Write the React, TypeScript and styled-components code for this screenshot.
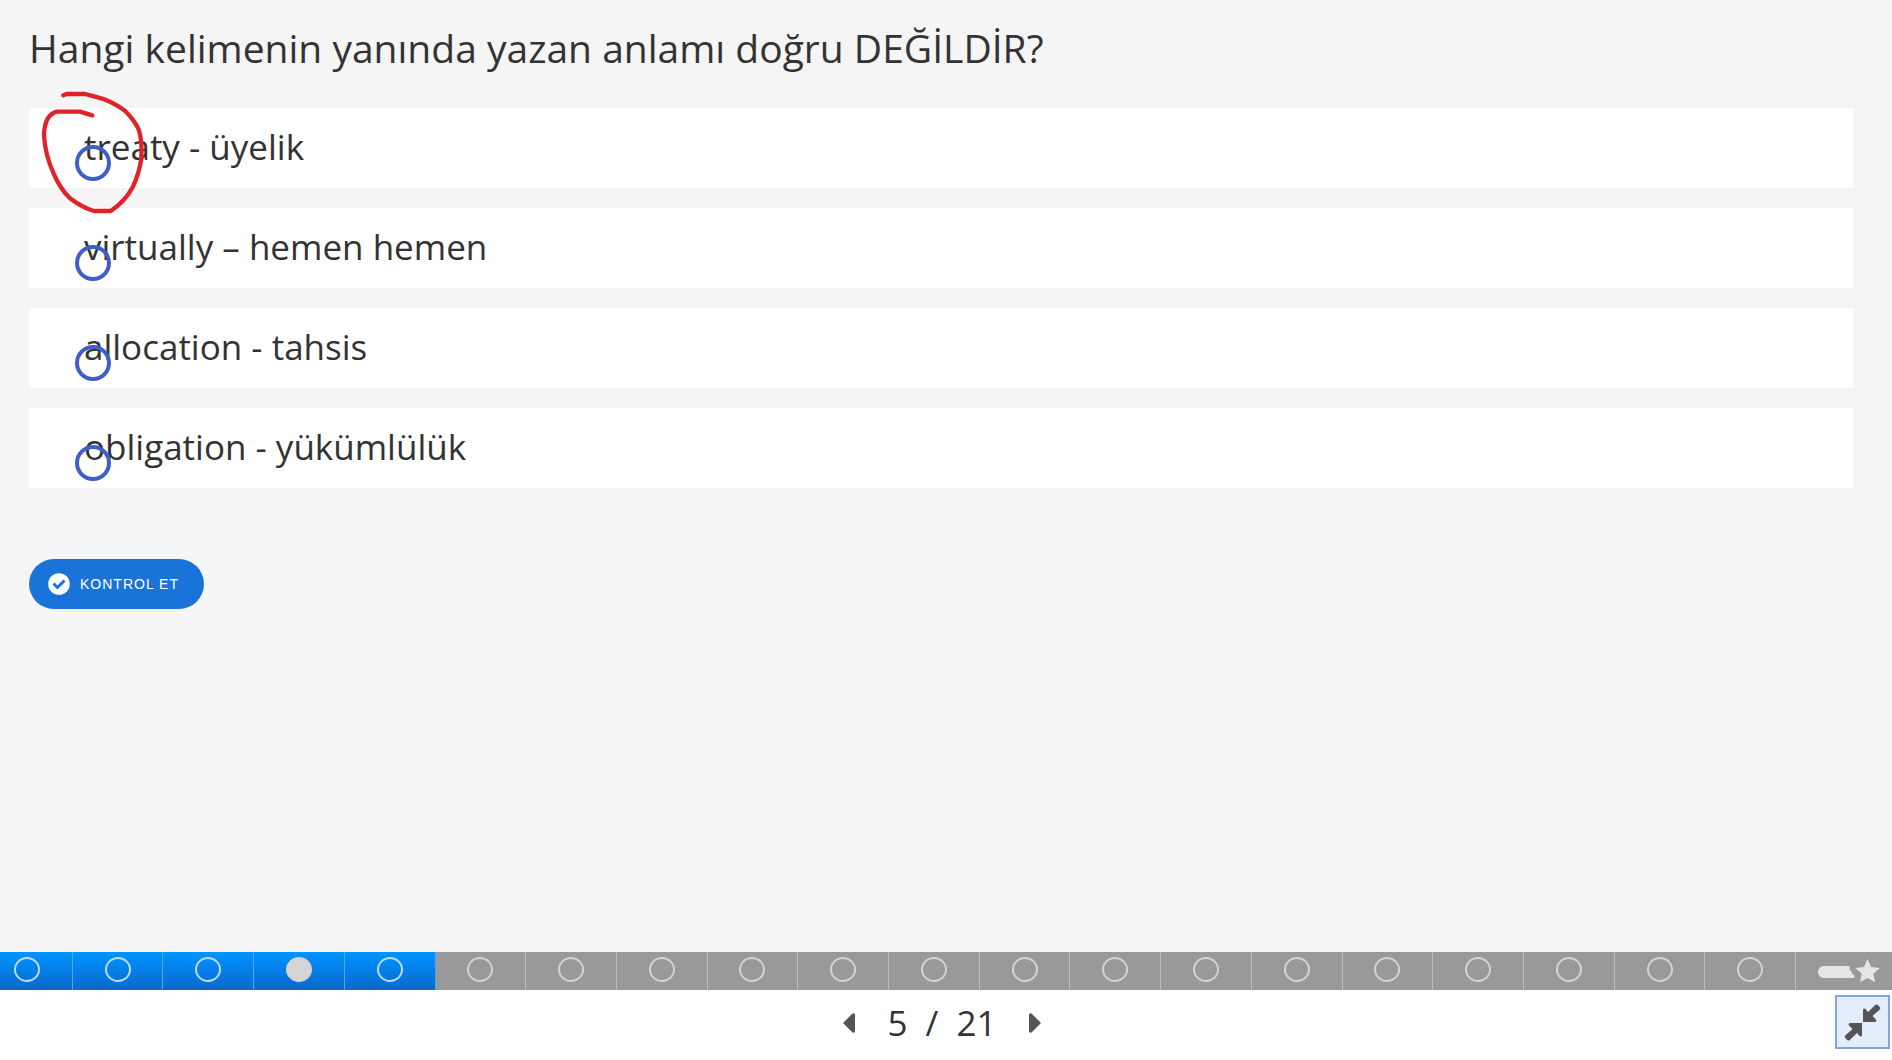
import React, { useState } from "react";
import styled, { createGlobalStyle } from "styled-components";

const GlobalStyle = createGlobalStyle`
  *, *::before, *::after { box-sizing: border-box; }
  body { margin: 0; background: #f5f5f5; }
`;

const Page = styled.div`
  position: relative;
  display: flex;
  flex-direction: column;
  min-height: 100vh;
  overflow: hidden;
  color: #333;
  background: #f5f5f5;
  font-family: "Open Sans", "Noto Sans", sans-serif;
`;

const Content = styled.main`
  flex: 1;
  padding: 18px 39px 40px 29px;
`;

const Question = styled.h1`
  margin: 0 0 30px;
  font-size: 39px;
  line-height: 60px;
  font-weight: 400;
`;

const Answers = styled.div`
  display: flex;
  flex-direction: column;
  gap: 20px;
  margin-bottom: 71px;
`;

const Answer = styled.label`
  position: relative;
  display: block;
  padding: 13px 55px 15px;
  background: #fff;
  font-size: 35px;
  line-height: 52px;
  cursor: pointer;
`;

const Radio = styled.input`
  position: absolute;
  left: 46px;
  top: 37px;
  width: 36px;
  height: 36px;
  margin: 0;
  appearance: none;
  border: 4px solid #3f5fc8;
  border-radius: 50%;
  &:checked { background: #3f5fc8; }
`;

const CheckButton = styled.button`
  display: inline-flex;
  align-items: center;
  gap: 10px;
  height: 50px;
  padding: 0 25px 0 19px;
  border: 0;
  border-radius: 25px;
  color: #fff;
  background: #1a73d9;
  font-family: "Liberation Sans", Arial, sans-serif;
  font-size: 14px;
  letter-spacing: 1px;
  text-transform: uppercase;
  cursor: pointer;
`;

const Progress = styled.nav`
  display: flex;
  height: 38px;
  margin-left: -18px;
  background: #999;
`;

const Step = styled.button<{ $done: boolean }>`
  display: flex;
  flex: 1;
  justify-content: center;
  padding: 5px 0 0;
  border: 0;
  border-right: 1px solid ${(p) => (p.$done ? "#4fa6ee" : "#bdbdbd")};
  background: ${(p) => (p.$done ? "linear-gradient(#0095ff, #0a68cc)" : "#999")};
  cursor: pointer;
`;

const Dot = styled.span<{ $done: boolean; $filled: boolean }>`
  width: 26px;
  height: 25px;
  border: 2px solid ${(p) => (p.$filled ? "#d4d4d4" : p.$done ? "#b9dcf8" : "#d4d4d4")};
  border-radius: 50%;
  background: ${(p) => (p.$filled ? "#d4d4d4" : "transparent")};
`;

const Summary = styled.button`
  display: flex;
  justify-content: flex-end;
  width: 96px;
  padding: 6px 11px 0 0;
  border: 0;
  background: #999;
  cursor: pointer;
`;

const Footer = styled.footer`
  display: grid;
  grid-template-columns: 1fr auto 1fr;
  align-items: start;
  height: 70px;
  padding: 5px 2px 0;
  background: #fff;
`;

const Pager = styled.div`
  grid-column: 2;
  display: flex;
  align-items: center;
  gap: 33px;
  height: 56px;
  margin-right: 8px;
`;

const Arrow = styled.button`
  display: flex;
  padding: 0;
  border: 0;
  background: none;
  cursor: pointer;
`;

const Count = styled.div`
  display: flex;
  gap: 18px;
  font-size: 35px;
  line-height: 52px;
`;

const ExitFullscreen = styled.button`
  display: grid;
  place-items: center;
  justify-self: end;
  width: 55px;
  height: 54px;
  padding: 0;
  border: 2px solid #82a5e0;
  background: #e4edfd;
  cursor: pointer;
`;

const Scribble = styled.svg`
  position: absolute;
  left: 30px;
  top: 80px;
  pointer-events: none;
`;

const options = [
  "treaty - üyelik",
  "virtually – hemen hemen",
  "allocation - tahsis",
  "obligation - yükümlülük",
];

const steps = Array.from({ length: 20 }, (_, i) => i);

export default function App() {
  const [choice, setChoice] = useState<number | null>(null);

  return (
    <Page>
      <GlobalStyle />
      <Content>
        <Question id="question">Hangi kelimenin yanında yazan anlamı doğru DEĞİLDİR?</Question>
        <Answers role="radiogroup" aria-labelledby="question">
          {options.map((text, i) => (
            <Answer key={text} htmlFor={`answer-${i}`}>
              {text}
              <Radio
                id={`answer-${i}`}
                type="radio"
                name="answer"
                checked={choice === i}
                onChange={() => setChoice(i)}
              />
            </Answer>
          ))}
        </Answers>
        <CheckButton type="button">
          <svg width="22" height="22" viewBox="0 0 22 22" aria-hidden="true">
            <circle cx="11" cy="11" r="10.8" fill="#fff" />
            <path d="M5.500 10.500 9.500 14.500l7-7" fill="none" stroke="#1a73d9" strokeWidth="3" />
          </svg>
          Kontrol et
        </CheckButton>
      </Content>

      <Progress aria-label="Slaytlar">
        {steps.map((i) => (
          <Step key={i} type="button" $done={i < 5} aria-label={`Slayt ${i + 1}`}>
            <Dot $done={i < 5} $filled={i === 3} />
          </Step>
        ))}
        <Summary type="button" aria-label="Özet">
          <svg width="64" height="26" viewBox="0 0 64 26" aria-hidden="true">
            <path
              d="M7 8h25.500v3q.3 1.500 2 2.500l.5 2.500 2.500 1.500V20H7A6 6 0 0 1 7 8Z"
              fill="#e6e6e6"
            />
            <path
              d="M50.500 1l3.600 8 8.700.9-6.500 5.900 1.900 8.500-7.700-4.300-7.600 4.300 1.900-8.500L38.300 9.900l8.700-.9Z"
              fill="#e6e6e6"
            />
          </svg>
        </Summary>
      </Progress>

      <Footer>
        <Pager>
          <Arrow type="button" aria-label="Önceki">
            <svg width="12" height="20" viewBox="0 0 12 20" aria-hidden="true">
              <path d="M0 10 9.500.5Q12-.5 12 2v16q0 2.500-2.500 1.500Z" fill="#555" />
            </svg>
          </Arrow>
          <Count>
            <span>5</span>
            <span>/</span>
            <span>21</span>
          </Count>
          <Arrow type="button" aria-label="Sonraki">
            <svg width="12" height="20" viewBox="0 0 12 20" aria-hidden="true">
              <path d="M12 10 2.500.5Q0-.5 0 2v16q0 2.500 2.500 1.500Z" fill="#555" />
            </svg>
          </Arrow>
        </Pager>
        <ExitFullscreen type="button" aria-label="Tam ekrandan çık">
          <svg width="37" height="37" viewBox="0 0 37 37" fill="#555" aria-hidden="true">
            <path d="M19 18V5.500q1-1.500 2.500-.5l2.500 3L31.500.8q1.200-.8 2.300.3l2 2q1 1.200 0 2.300L28.500 12l3.500 3.500q1 1.500-.5 2.500Z" />
            <path d="M18 19v12.500q-1 1.500-2.500.5l-2.500-3-7.500 7.200q-1.200.8-2.300-.3l-2-2q-1-1.200 0-2.300L8.500 25 5 21.500Q4 20 5.500 19Z" />
          </svg>
        </ExitFullscreen>
      </Footer>

      <Scribble width="120" height="140" viewBox="0 0 360 420" aria-hidden="true">
        <path
          d="M100 46 110 42H165L195 50Q240 60 285 92 313 120 326 148 337 180 334 235 328 280 308 322 285 365 242 393H192Q160 385 120 355 90 325 72 283 45 225 42 165 44 105 80 95H150L187 106"
          fill="none"
          stroke="#e02229"
          strokeWidth="13"
          strokeLinejoin="round"
          strokeLinecap="round"
        />
      </Scribble>
    </Page>
  );
}
